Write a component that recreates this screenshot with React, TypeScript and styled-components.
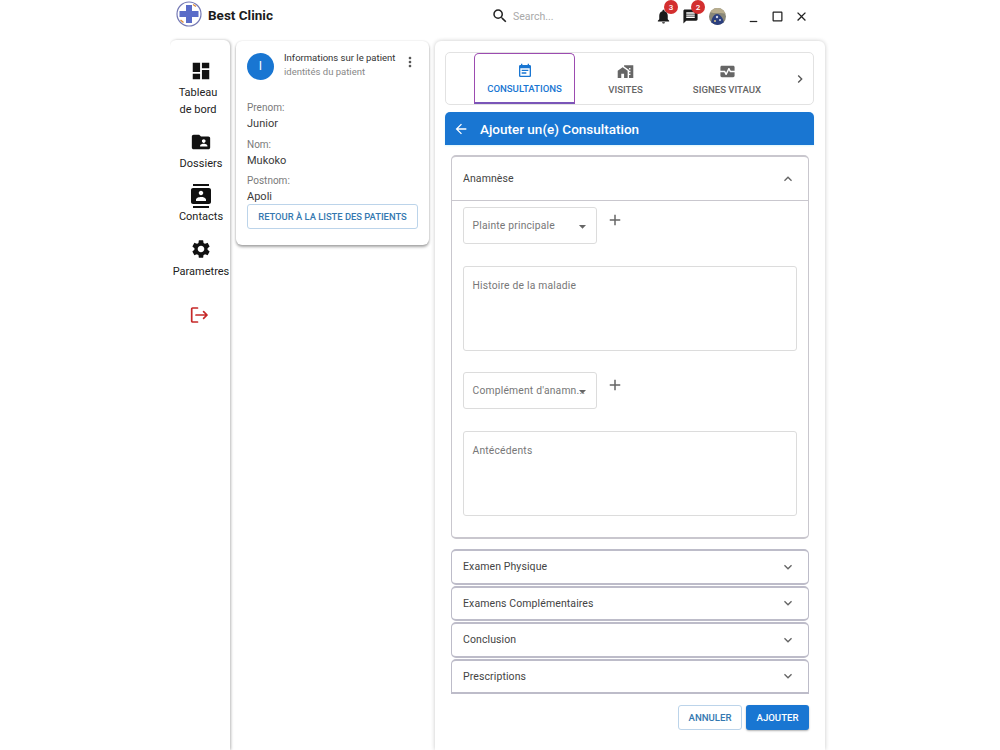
import React from "react";
import styled, { createGlobalStyle } from "styled-components";
import {
  MdDashboard, MdFolderShared, MdContacts, MdSettings, MdEventNote, MdHomeWork, MdMonitorHeart,
  MdNotifications, MdMessage, MdSearch, MdClose, MdCropSquare, MdMinimize, MdArrowBack,
  MdChevronRight, MdExpandMore, MdExpandLess, MdAdd, MdMoreVert, MdArrowDropDown,
} from "react-icons/md";

const Global = createGlobalStyle`
  html, body { margin: 0; padding: 0; background: #fff; height: 100%; overflow: hidden; }
  * { box-sizing: border-box; }
  body { font-family: Roboto, "Liberation Sans", sans-serif; color: rgba(0,0,0,0.87); }
`;

const Shell = styled.div`
  width: 660px;
  height: 750px;
  margin-left: 170px;
  display: flex;
  flex-direction: column;
`;
const TopBar = styled.header`
  height: 40px;
  flex: none;
  display: flex;
  align-items: center;
  padding-left: 6px;
  position: relative;
`;
const Brand = styled.div`
  width: 286px;
  flex: none;
  display: flex;
  align-items: center;
  gap: 6px;
  font-size: 13.5px;
  font-weight: 700;
  color: #1c1c1c;
  margin-top: -12px;
`;
const BrandName = styled.span`
  margin-top: 2px;
`;
const SearchBox = styled.div`
  width: 164px;
  flex: none;
  display: flex;
  align-items: center;
  gap: 4px;
  font-size: 10.5px;
  color: #a9a9a9;
  margin-top: -8px;
  margin-left: 29px;
`;
const Actions = styled.div`
  display: flex;
  align-items: center;
  margin-top: -8px;
  margin-left: -5px;
`;
const Notif = styled.div`
  position: relative;
  width: 27px;
  height: 20px;
  display: flex;
  justify-content: center;
  align-items: center;
  color: #1a1a1a;
`;
const Badge = styled.span`
  position: absolute;
  top: -6px;
  right: -1px;
  width: 14px;
  height: 14px;
  border-radius: 50%;
  background: #d32f2f;
  color: #fff;
  font-size: 8px;
  font-weight: 500;
  display: flex;
  align-items: center;
  justify-content: center;
`;
const WindowButtons = styled.div`
  display: flex;
  align-items: center;
  gap: 9px;
  margin-left: 15px;
  color: #222;
`;
const Body = styled.div`
  flex: 1;
  display: flex;
  min-height: 0;
`;
const Sidebar = styled.nav`
  width: 60px;
  flex: none;
  border-radius: 6px 6px 0 0;
  box-shadow: 1px 0 3px rgba(0,0,0,0.28);
  clip-path: inset(-4px -4px 0 0);
  display: flex;
  flex-direction: column;
  align-items: center;
  padding: 20px 0 0 2px;
`;
const NavItem = styled.div<{ $h: number; $gap?: number }>`
  height: ${(p) => p.$h}px;
  display: flex;
  flex-direction: column;
  align-items: center;
  font-size: 11px;
  line-height: 16.5px;
  color: #222;
  text-align: center;
  white-space: nowrap;
  svg { color: #111; margin-bottom: ${(p) => p.$gap ?? 3}px; flex: none; }
`;
const NavLabel = styled.span<{ $nudge?: number }>`
  margin-right: ${(p) => p.$nudge ?? 0}px;
`;
const LogoutIcon = styled.div`
  margin-top: 14px;
  margin-left: -4px;
  color: #c62828;
  height: 20px;
`;
const PatientCard = styled.aside`
  width: 193px;
  height: 204px;
  flex: none;
  margin: 1px 0 0 6px;
  border-radius: 6px;
  box-shadow: 0 2px 3px rgba(0,0,0,0.35), 0 0 2px rgba(0,0,0,0.12);
  padding: 11px;
`;
const CardHead = styled.div`
  display: flex;
  align-items: center;
  gap: 10px;
  height: 28px;
  margin-bottom: 21px;
`;
const Avatar = styled.div`
  width: 27px;
  height: 27px;
  flex: none;
  border-radius: 50%;
  background: #1976d2;
  color: #fff;
  font-size: 12px;
  display: flex;
  align-items: center;
  justify-content: center;
`;
const HeadText = styled.div`
  flex: 1;
  min-width: 0;
  font-size: 9.5px;
  line-height: 14px;
  white-space: nowrap;
  color: #333;
  margin-top: -2px;
`;
const HeadSub = styled.div`
  color: #888;
`;
const MoreBtn = styled.div`
  display: flex;
  color: #555;
  margin-top: -8px;
`;
const FieldLabel = styled.div`
  font-size: 10px;
  line-height: 14px;
  color: #7a7a7a;
`;
const FieldValue = styled.div`
  font-size: 11px;
  line-height: 16px;
  color: #3a3a3a;
  margin: 1px 0 5.5px;
`;
const LastValue = styled(FieldValue)`
  margin-bottom: 0;
  line-height: 15px;
`;
const Outlined = styled.button`
  font-family: inherit;
  font-size: 9.4px;
  font-weight: 500;
  color: #3478b0;
  background: #fff;
  border: 1px solid #bcd4ea;
  border-radius: 3px;
  cursor: pointer;
  white-space: nowrap;
`;
const BackButton = styled(Outlined)`
  width: 171px;
  height: 25px;
  padding: 0;
  display: block;
`;
const Main = styled.main`
  width: 390px;
  flex: none;
  margin: 1px 0 0 6px;
  border-radius: 6px 6px 0 0;
  box-shadow: 0 0 4px rgba(0,0,0,0.22);
  padding: 11px 11px 0 10px;
  display: flex;
  flex-direction: column;
`;
const Tabs = styled.div`
  height: 53px;
  flex: none;
  border: 1px solid #e2e2e2;
  border-radius: 5px;
  display: flex;
  align-items: stretch;
  padding-left: 28px;
`;
const Tab = styled.div<{ $active?: boolean; $w: number }>`
  width: ${(p) => p.$w}px;
  flex: none;
  display: flex;
  flex-direction: column;
  align-items: center;
  justify-content: center;
  gap: 4px;
  font-size: 9.6px;
  font-weight: 500;
  color: ${(p) => (p.$active ? "#1976d2" : "#666")};
  border: ${(p) => (p.$active ? "1px solid #9c4bb0" : "none")};
  border-bottom: ${(p) => (p.$active ? "2px solid #7a55b8" : "none")};
  border-radius: 5px 5px 0 0;
  white-space: nowrap;
`;
const TabArrow = styled.div`
  flex: 1;
  display: flex;
  align-items: center;
  justify-content: center;
  color: #555;
  padding-left: 8px;
`;
const Banner = styled.div`
  height: 33px;
  flex: none;
  margin-top: 7px;
  background: #1976d2;
  border-radius: 5px 5px 0 0;
  color: #fff;
  font-size: 13.5px;
  font-weight: 500;
  display: flex;
  align-items: center;
  gap: 11px;
  padding-left: 8px;
  box-shadow: 0 1px 2px rgba(120,220,240,0.25);
`;
const Accordion = styled.div`
  flex: none;
  margin: 10px 5px 0 6px;
  display: flex;
  flex-direction: column;
`;
const Panel = styled.section<{ $open?: boolean; $cut?: boolean }>`
  border: 1px solid ${(p) => (p.$open ? "#c9c7ce" : "#bdbcc9")};
  border-width: 2px 1.5px 2.5px;
  border-radius: ${(p) => (p.$cut ? "5px 5px 0 0" : "5px")};
  height: ${(p) => (p.$open ? "384px" : "35.5px")};
  margin-top: ${(p) => (p.$open ? "0" : "1px")};
  overflow: hidden;
  background: #fff;
`;
const FirstClosed = styled(Panel)`
  margin-top: 10px;
`;
const PanelHead = styled.div<{ $open?: boolean }>`
  height: ${(p) => (p.$open ? "44px" : "31px")};
  display: flex;
  align-items: center;
  justify-content: space-between;
  padding: 0 12px 0 11px;
  font-size: 10.5px;
  letter-spacing: 0.1px;
  color: #444;
  border-bottom: ${(p) => (p.$open ? "1px solid #c9c7ce" : "none")};
  svg { color: #666; }
`;
const PanelBody = styled.div`
  padding: 6px 11px 0;
`;
const SelectRow = styled.div`
  display: flex;
  gap: 9px;
  margin-bottom: 22px;
`;
const SelectBox = styled.div`
  width: 134px;
  height: 37px;
  border: 1px solid #dcdcdc;
  border-radius: 3px;
  display: flex;
  align-items: center;
  padding-left: 8.5px;
  font-size: 10.3px;
  letter-spacing: 0.2px;
  color: #777;
  position: relative;
  white-space: nowrap;
  overflow: hidden;
`;
const Caret = styled.span`
  position: absolute;
  right: 5px;
  top: 10px;
  display: flex;
  color: #666;
`;
const PlusBtn = styled.div`
  display: flex;
  color: #666;
  margin-top: 4px;
`;
const TextArea = styled.div<{ $mb?: number }>`
  height: 85px;
  border: 1px solid #dcdcdc;
  border-radius: 3px;
  padding: 12px 8.5px;
  font-size: 10.3px;
  letter-spacing: 0.2px;
  color: #777;
  margin-bottom: ${(p) => p.$mb ?? 0}px;
`;
const Footer = styled.div`
  display: flex;
  justify-content: flex-end;
  gap: 4px;
  margin-top: 11px;
  padding-right: 5px;
`;
const CancelButton = styled(Outlined)`
  width: 64px;
  height: 25px;
  font-size: 9.6px;
  padding: 0;
`;
const SubmitButton = styled.button`
  width: 63px;
  height: 25px;
  padding: 0;
  font-family: inherit;
  font-size: 9.6px;
  font-weight: 500;
  color: #fff;
  background: #1976d2;
  border: none;
  border-radius: 3px;
  box-shadow: 0 1px 2px rgba(0,0,0,0.3);
`;

const Logo = () => (
  <svg width="26" height="26" viewBox="0 0 26 26">
    <circle cx="13" cy="13" r="12" fill="#fff" stroke="#7478b4" strokeWidth="1.2" />
    <path d="M10 4h6v6h6.5v6H16v6h-6v-6H3.5v-6H10z" fill="#5a6cc8" />
    <path d="M17 3.5l3 2M4.5 19l3 2.5" stroke="#d98a3a" strokeWidth="1.4" />
  </svg>
);
const UserPhoto = () => (
  <svg width="17" height="17" viewBox="0 0 17 17">
    <defs><clipPath id="uc"><circle cx="8.5" cy="8.5" r="8.5" /></clipPath></defs>
    <g clipPath="url(#uc)">
      <rect width="17" height="17" fill="#8a8878" />
      <path d="M0 0h17v6C12 4 6 6 0 4z" fill="#b8ad8e" />
      <path d="M2 17c0-7 3-11 6-11s7 4 7 11z" fill="#2b3f7e" />
      <circle cx="8" cy="9" r="1.2" fill="#cfd6e6" />
      <circle cx="11" cy="12" r="1" fill="#cfd6e6" />
      <circle cx="6" cy="13" r="1" fill="#d9c68a" />
    </g>
  </svg>
);
const Logout = () => (
  <svg width="20" height="20" viewBox="0 0 20 20" fill="none" stroke="currentColor" strokeWidth="1.7" strokeLinecap="round" strokeLinejoin="round">
    <path d="M8.5 3H3.6a.9.9 0 0 0-.9.9v12.2a.9.9 0 0 0 .9.9h4.9" />
    <path d="M7 10h11M14.6 6.6 18 10l-3.4 3.4" />
  </svg>
);

const closed = ["Examens Complémentaires", "Conclusion"];

export default function App() {
  return (
    <Shell>
      <Global />
      <TopBar>
        <Brand><Logo /><BrandName>Best Clinic</BrandName></Brand>
        <SearchBox><MdSearch size={18} color="#222" />Search...</SearchBox>
        <Actions>
          <Notif><MdNotifications size={17} /><Badge>3</Badge></Notif>
          <Notif><MdMessage size={17} /><Badge>2</Badge></Notif>
          <Notif><UserPhoto /></Notif>
          <WindowButtons>
            <MdMinimize size={15} />
            <MdCropSquare size={15} />
            <MdClose size={15} />
          </WindowButtons>
        </Actions>
      </TopBar>
      <Body>
        <Sidebar>
          <NavItem $h={71}>
            <MdDashboard size={22} />
            <NavLabel $nudge={6}>Tableau</NavLabel>
            <NavLabel $nudge={6}>de bord</NavLabel>
          </NavItem>
          <NavItem $h={53}><MdFolderShared size={22} /><NavLabel>Dossiers</NavLabel></NavItem>
          <NavItem $h={54} $gap={1}><MdContacts size={24} /><NavLabel>Contacts</NavLabel></NavItem>
          <NavItem $h={53} $gap={4}><MdSettings size={22} /><NavLabel>Parametres</NavLabel></NavItem>
          <LogoutIcon><Logout /></LogoutIcon>
        </Sidebar>
        <PatientCard>
          <CardHead>
            <Avatar>I</Avatar>
            <HeadText>
              Informations sur le patient
              <HeadSub>identités du patient</HeadSub>
            </HeadText>
            <MoreBtn><MdMoreVert size={16} /></MoreBtn>
          </CardHead>
          <FieldLabel>Prenom:</FieldLabel>
          <FieldValue>Junior</FieldValue>
          <FieldLabel>Nom:</FieldLabel>
          <FieldValue>Mukoko</FieldValue>
          <FieldLabel>Postnom:</FieldLabel>
          <LastValue>Apoli</LastValue>
          <BackButton>RETOUR À LA LISTE DES PATIENTS</BackButton>
        </PatientCard>
        <Main>
          <Tabs>
            <Tab $active $w={101}><MdEventNote size={16} />CONSULTATIONS</Tab>
            <Tab $w={101}><MdHomeWork size={17} />VISITES</Tab>
            <Tab $w={102}><MdMonitorHeart size={17} />SIGNES VITAUX</Tab>
            <TabArrow><MdChevronRight size={16} /></TabArrow>
          </Tabs>
          <Banner><MdArrowBack size={16} />Ajouter un(e) Consultation</Banner>
          <Accordion>
            <Panel $open>
              <PanelHead $open>Anamnèse<MdExpandLess size={16} /></PanelHead>
              <PanelBody>
                <SelectRow>
                  <SelectBox>Plainte principale<Caret><MdArrowDropDown size={17} /></Caret></SelectBox>
                  <PlusBtn><MdAdd size={18} /></PlusBtn>
                </SelectRow>
                <TextArea $mb={21}>Histoire de la maladie</TextArea>
                <SelectRow>
                  <SelectBox>Complément d'anamn...<Caret><MdArrowDropDown size={17} /></Caret></SelectBox>
                  <PlusBtn><MdAdd size={18} /></PlusBtn>
                </SelectRow>
                <TextArea>Antécédents</TextArea>
              </PanelBody>
            </Panel>
            <FirstClosed><PanelHead>Examen Physique<MdExpandMore size={16} /></PanelHead></FirstClosed>
            {closed.map((t) => (
              <Panel key={t}><PanelHead>{t}<MdExpandMore size={16} /></PanelHead></Panel>
            ))}
            <Panel $cut><PanelHead>Prescriptions<MdExpandMore size={16} /></PanelHead></Panel>
          </Accordion>
          <Footer>
            <CancelButton>ANNULER</CancelButton>
            <SubmitButton>AJOUTER</SubmitButton>
          </Footer>
        </Main>
      </Body>
    </Shell>
  );
}
